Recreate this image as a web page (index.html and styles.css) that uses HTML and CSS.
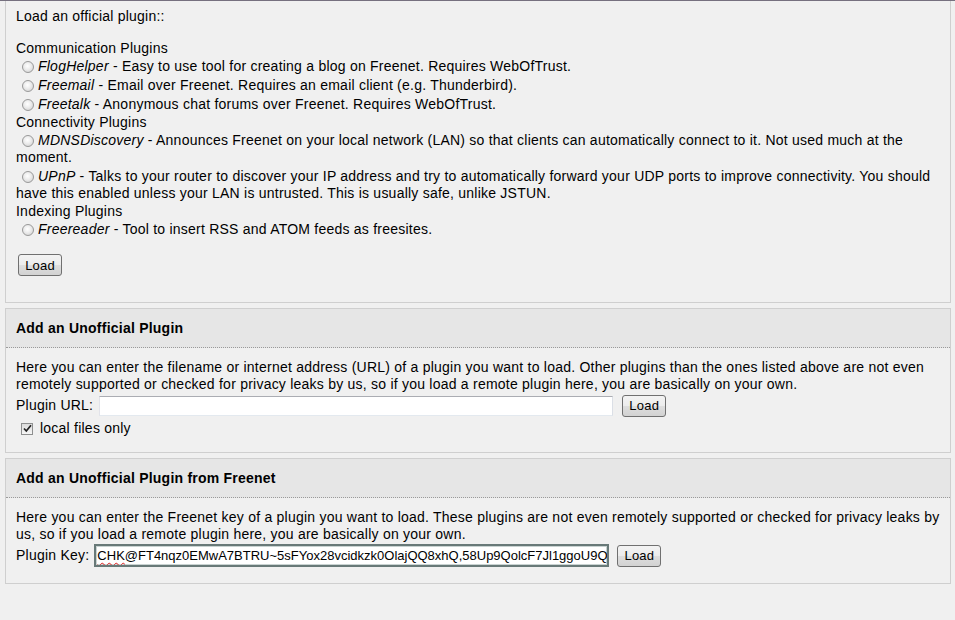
FILE: index.html
```html
<!DOCTYPE html>
<html>
<head>
<meta charset="utf-8">
<title>Plugins</title>
<link rel="stylesheet" href="styles.css">
</head>
<body>
<div class="topline"></div>

<div class="box first">
  <p class="intro">Load an official plugin::</p>
  <div class="cat">Communication Plugins</div>
  <div class="item"><input type="radio" name="p" class="radio"><i>FlogHelper</i> - Easy to use tool for creating a blog on Freenet. Requires WebOfTrust.</div>
  <div class="item"><input type="radio" name="p" class="radio"><i>Freemail</i> - Email over Freenet. Requires an email client (e.g. Thunderbird).</div>
  <div class="item"><input type="radio" name="p" class="radio"><i>Freetalk</i> - Anonymous chat forums over Freenet. Requires WebOfTrust.</div>
  <div class="cat">Connectivity Plugins</div>
  <div class="item"><input type="radio" name="p" class="radio"><i>MDNSDiscovery</i> - Announces Freenet on your local network (LAN) so that clients can automatically connect to it. Not used much at the moment.</div>
  <div class="item"><input type="radio" name="p" class="radio"><i>UPnP</i> - Talks to your router to discover your IP address and try to automatically forward your UDP ports to improve connectivity. You should have this enabled unless your LAN is untrusted. This is usually safe, unlike JSTUN.</div>
  <div class="cat">Indexing Plugins</div>
  <div class="item"><input type="radio" name="p" class="radio"><i>Freereader</i> - Tool to insert RSS and ATOM feeds as freesites.</div>
  <button class="btn btn-first">Load</button>
</div>

<div class="box">
  <div class="head">Add an Unofficial Plugin</div>
  <div class="body body-url">
    <p class="text">Here you can enter the filename or internet address (URL) of a plugin you want to load. Other plugins than the ones listed above are not even remotely supported or checked for privacy leaks by us, so if you load a remote plugin here, you are basically on your own.</p>
    <div class="row">
      <span class="label">Plugin URL:</span>
      <input type="text" class="field url-field">
      <button class="btn btn-url">Load</button>
    </div>
    <label class="check-row">
      <span class="check"><svg width="9" height="9" viewBox="0 0 9 9"><path d="M1 4.5 L3.3 7 L8 1.2" fill="none" stroke="#222" stroke-width="1.7"/></svg></span>
      local files only
    </label>
  </div>
</div>

<div class="box">
  <div class="head">Add an Unofficial Plugin from Freenet</div>
  <div class="body body-key">
    <p class="text">Here you can enter the Freenet key of a plugin you want to load. These plugins are not even remotely supported or checked for privacy leaks by us, so if you load a remote plugin here, you are basically on your own.</p>
    <div class="row">
      <span class="label">Plugin Key:</span>
      <div class="keyfield" role="textbox"><span class="spell">CHK</span>@FT4nqz0EMwA7BTRU~5sFYox28vcidkzk0OlajQQ8xhQ,58Up9QolcF7Jl1ggoU9QbBkGnLpJwwXNwDPlFQ1B1iM,AAIC--8/Freereader.jar</div>
      <button class="btn btn-key">Load</button>
    </div>
  </div>
</div>
</body>
</html>
```

FILE: styles.css
```css
html, body {
  margin: 0;
  padding: 0;
}
body {
  background: #f0f0f0;
  color: #000;
  font-family: "Liberation Sans", Arial, sans-serif;
  font-size: 14px;
  line-height: 17px;
  letter-spacing: 0.23px;
}
.topline {
  height: 1px;
  background: #76707f;
}
.box {
  margin: 0 4px 5px 5px;
  border: 1px solid #cfcfcf;
}
.box.first {
  border-top: none;
  padding: 7px 10px 26px;
}
.intro {
  margin: 0 0 15px;
}
.item {
  padding: 1px 0;
}
.radio {
  -webkit-appearance: none;
  appearance: none;
  display: inline-block;
  width: 12px;
  height: 12px;
  margin: 0 4px 0 6px;
  vertical-align: -2px;
  border: 1px solid #999999;
  border-radius: 50%;
  box-sizing: border-box;
  background: radial-gradient(circle at 45% 40%, #ffffff 0%, #eeeeee 40%, #cccccc 100%);
}
.btn {
  display: block;
  width: 44px;
  height: 22px;
  padding: 0;
  border: 1px solid #707070;
  border-radius: 3px;
  background: linear-gradient(#f3f3f3 0%, #ececec 50%, #dedede 51%, #d2d2d2 100%);
  font-family: "Liberation Sans", Arial, sans-serif;
  font-size: 13px;
  letter-spacing: 0.2px;
  color: #000;
  box-sizing: border-box;
}
.btn-first {
  margin: 15px 0 0 2px;
}
.head {
  padding: 10px 10px;
  line-height: 18px;
  background: #e6e6e6;
  border-bottom: 1px dotted #9a9a9a;
  font-weight: bold;
}
.body {
  padding: 11px 10px 14px;
}
.body-key {
  padding-bottom: 16px;
}
.text {
  margin: 0;
}
.row {
  display: flex;
  align-items: center;
  height: 23px;
  margin-top: 1px;
}
.field {
  box-sizing: border-box;
  height: 20px;
  margin: 0;
  padding: 0 2px;
  border: 1px solid;
  border-color: #abadb3 #dbdfe6 #e3e9ef #e2e3ea;
  background: #fff;
  font-family: "Liberation Sans", Arial, sans-serif;
  font-size: 13px;
}
.url-field {
  width: 514px;
  margin-left: 6px;
}
.btn-url {
  margin-left: 9px;
}
.check-row {
  display: flex;
  align-items: center;
  height: 19px;
  margin-top: 2px;
}
.check {
  display: flex;
  align-items: center;
  justify-content: center;
  width: 12px;
  height: 12px;
  margin: 0 7px 0 5px;
  box-sizing: border-box;
  border: 1px solid #8e8f8f;
  background: linear-gradient(#dcdcdc, #f6f6f6);
}
.keyfield {
  box-sizing: border-box;
  width: 515px;
  height: 23px;
  margin-left: 5px;
  padding: 0 1px;
  border: 2px solid #687978;
  box-shadow: inset 0 0 0 1px #c9d3d2;
  background: #fff;
  font-size: 13px;
  letter-spacing: 0;
  line-height: 19px;
  white-space: nowrap;
  overflow: hidden;
}
.spell {
  text-decoration: underline wavy #e02020;
  text-decoration-thickness: 1px;
  text-underline-offset: 2px;
}
.btn-key {
  margin-left: 8px;
}
```
